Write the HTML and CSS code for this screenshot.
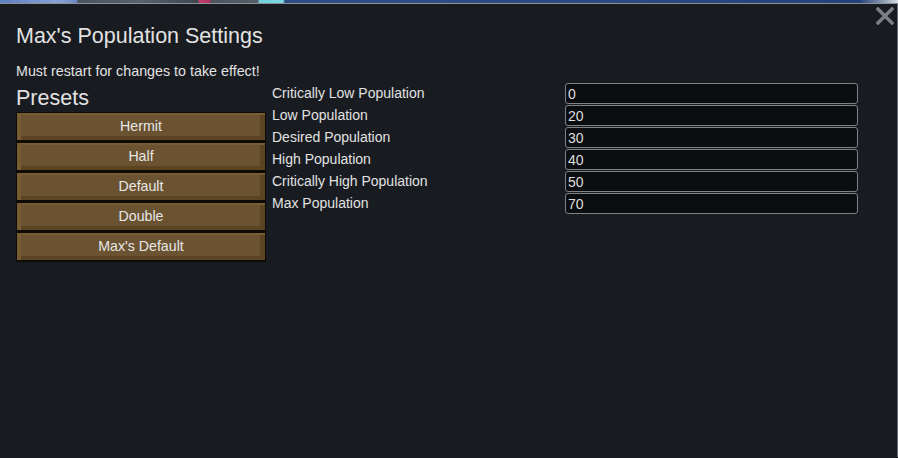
FILE: index.html
```html
<!DOCTYPE html>
<html lang="en">
<head>
<meta charset="utf-8">
<title>Max's Population Settings</title>
<link rel="stylesheet" href="styles.css">
</head>
<body>
<div class="backdrop"></div>
<div class="panel">
  <button class="close" aria-label="Close">
    <svg width="18" height="18" viewBox="0 0 18 18"><path d="M2 2 L16 16 M16 2 L2 16" stroke="#7c7f84" stroke-width="3.4" stroke-linecap="square" fill="none"/></svg>
  </button>
  <h1 class="title">Max's Population Settings</h1>
  <p class="note">Must restart for changes to take effect!</p>
  <div class="main">
    <div class="presets">
      <h2 class="presets-title">Presets</h2>
      <button class="preset">Hermit</button>
      <button class="preset">Half</button>
      <button class="preset">Default</button>
      <button class="preset">Double</button>
      <button class="preset">Max's Default</button>
    </div>
    <div class="fields">
      <label class="label">Critically Low Population</label><input class="field" value="0">
      <label class="label">Low Population</label><input class="field" value="20">
      <label class="label">Desired Population</label><input class="field" value="30">
      <label class="label">High Population</label><input class="field" value="40">
      <label class="label">Critically High Population</label><input class="field" value="50">
      <label class="label">Max Population</label><input class="field" value="70">
    </div>
  </div>
</div>
</body>
</html>
```

FILE: styles.css
```css
html, body {
  margin: 0;
  padding: 0;
  background: #181b20;
  font-family: "Liberation Sans", Arial, sans-serif;
  color: #e2e2e2;
  overflow: hidden;
}

.backdrop {
  height: 3px;
  background: linear-gradient(90deg,
    #5d7fc0 0, #8aa3d6 60px, #6a84bf 77px,
    #4b525c 78px, #5b616a 140px, #3f454e 198px,
    #c0406a 199px, #b03060 210px, #4e545d 211px, #585e66 258px,
    #6fd0d8 259px, #7ad8e0 283px, #2e4f86 285px,
    #2a4a80 600px, #24427a 860px, #9aa6b8 886px, #d8dde6 898px);
}

.panel {
  position: relative;
  height: 454px;
  box-sizing: border-box;
  border-top: 1px solid #8a929d;
  border-right: 1px solid #6a6f78;
  padding: 19px 16px 0 16px;
  background: #181b20;
}

.close {
  position: absolute;
  top: 3px;
  right: 3px;
  width: 18px;
  height: 18px;
  padding: 0;
  border: 0;
  background: none;
  display: flex;
}

.title {
  margin: 0 0 13px 0;
  font-size: 21.5px;
  line-height: 26px;
  font-weight: normal;
}

.note {
  margin: 0 0 3px 0;
  font-size: 14.3px;
  line-height: 18px;
}

.main {
  display: flex;
  gap: 6px;
  align-items: flex-start;
}

.presets {
  width: 250px;
  padding-top: 2px;
  display: flex;
  flex-direction: column;
}

.presets-title {
  margin: 0 0 1px 0;
  font-size: 21.5px;
  line-height: 26px;
  font-weight: normal;
}

.preset {
  height: 30px;
  box-sizing: border-box;
  margin: 0;
  padding: 0;
  border: 1px solid #0e0b07;
  border-bottom-width: 2px;
  background: #6b5331;
  box-shadow: inset 4px 2px 0 #775b35, inset -5px -4px 0 #5a4422;
  color: #e6e6e6;
  font-family: "Liberation Sans", Arial, sans-serif;
  font-size: 14.2px;
  line-height: 27px;
  text-align: center;
}

.fields {
  display: grid;
  grid-template-columns: 293px 293px;
  grid-auto-rows: 21px;
  row-gap: 1px;
}

.label {
  font-size: 14px;
  line-height: 21px;
  white-space: nowrap;
}

.field {
  height: 21px;
  box-sizing: border-box;
  margin: 0;
  padding: 1px 2px 0 2px;
  border: 1px solid #7e8185;
  border-radius: 3px;
  background: #0c0d10;
  color: #dedede;
  font-family: "Liberation Sans", Arial, sans-serif;
  font-size: 14px;
  outline: none;
}
```
